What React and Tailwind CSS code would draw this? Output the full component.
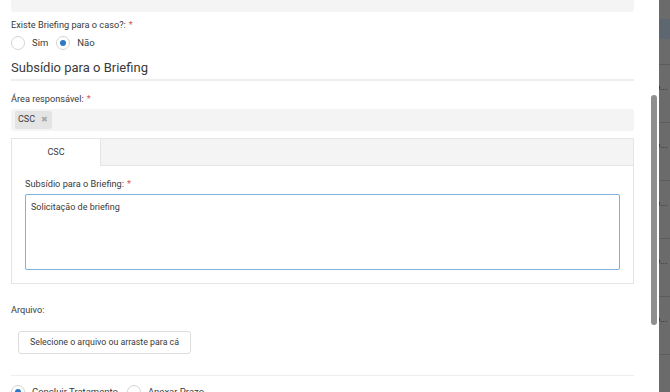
import React from 'react'

const font = { fontFamily: 'Roboto, "Open Sans", sans-serif' }

function Radio({ checked, label }) {
  return (
    <label className="flex items-center gap-[7px]">
      <span className="w-[14px] h-[14px] rounded-full border border-[#d4d4d4] bg-white flex items-center justify-center">
        {checked && <span className="w-[6px] h-[6px] rounded-full bg-[#2f78c4]" />}
      </span>
      <span className="text-[9.5px] text-[#3a3a3a] whitespace-nowrap">{label}</span>
    </label>
  )
}

function Req() {
  return <span className="text-[#d9534f] ml-[3px]">*</span>
}

// side list rows of the window behind the modal
const sideRows = [0, 1, 2, 3, 4, 5]

export default function App() {
  return (
    <div className="w-[670px] h-[392px] overflow-hidden flex bg-white" style={font}>
      <div className="relative w-[659px] h-full">
        <div className="pl-[11px] w-[634px] text-[#3a3a3a]">
          <div className="h-[12px] bg-[#f4f4f4] rounded-b-[3px]" />

          <div className="mt-[5px] text-[9.2px] leading-[16px]">
            Existe Briefing para o caso?:<Req />
          </div>
          <div className="mt-[2px] h-[16px] flex items-center gap-[8px]">
            <Radio label="Sim" />
            <Radio checked label="Não" />
          </div>

          <div className="mt-[6px] text-[13px] leading-[22px]">Subsídio para o Briefing</div>
          <div className="h-[2px] bg-[#eeeeee]" />

          <div className="mt-[10px] text-[9.2px] leading-[16px]">
            Área responsável:<Req />
          </div>
          <div className="mt-[2px] h-[22px] bg-[#f4f4f4] rounded-[3px] flex items-center pl-[4px]">
            <span className="h-[18px] pl-[3px] pr-[4px] bg-[#e4e4e4] rounded-[2px] flex items-center gap-[6px] text-[9px]">
              CSC
              <span className="text-[#a8a8a8] text-[8px] leading-none">✖</span>
            </span>
          </div>

          <div className="mt-[7px] border border-[#e5e5e5] h-[146px]">
            <div className="h-[27px] bg-[#f4f4f4] border-b border-[#e5e5e5] flex">
              <div className="w-[89px] h-[27px] bg-white border-r border-[#e5e5e5] flex items-center justify-center text-[9px]">
                CSC
              </div>
            </div>
            <div className="px-[13px] pt-[10px]">
              <div className="text-[9.2px] leading-[16px]">
                Subsídio para o Briefing:<Req />
              </div>
              <div className="mt-[2px] h-[76px] border border-[#7fb1dd] rounded-[2px] px-[5px] pt-[4px] text-[9px] leading-[16px]">
                Solicitação de briefing
              </div>
            </div>
          </div>

          <div className="mt-[18px] text-[9.2px] leading-[16px]">Arquivo:</div>
          <div className="mt-[13px] ml-[7px] w-[173px] h-[23px] border border-[#dddddd] rounded-[3px] flex items-center justify-center text-[8.8px] whitespace-nowrap">
            Selecione o arquivo ou arraste para cá
          </div>

          <div className="mt-[21px] h-px bg-[#eeeeee]" />
          <div className="mt-[9px] flex items-center gap-[9px]">
            <Radio checked label="Concluir Tratamento" />
            <Radio label="Anexar Prazo" />
          </div>
        </div>

        {/* scroll thumb */}
        <div className="absolute left-[651px] top-[95px] w-[6px] h-[230px] rounded-full bg-[#8f8f8f]" />
      </div>

      <div className="w-[11px] h-full bg-[#6b6b6b] flex flex-col overflow-hidden">
        <div className="h-[7px]" />
        {sideRows.map((i) => (
          <div key={i} className="h-[58px] shrink-0 border-b border-[#5c5c5c] flex flex-col justify-center relative">
            {i === 0 ? (
              <div className="h-[20px] bg-[#5e6670] mt-[-14px]" />
            ) : (
              <span className="text-[9px] text-[#222] leading-none mt-[-12px] -ml-[4px]">o...</span>
            )}
          </div>
        ))}
      </div>
    </div>
  )
}
